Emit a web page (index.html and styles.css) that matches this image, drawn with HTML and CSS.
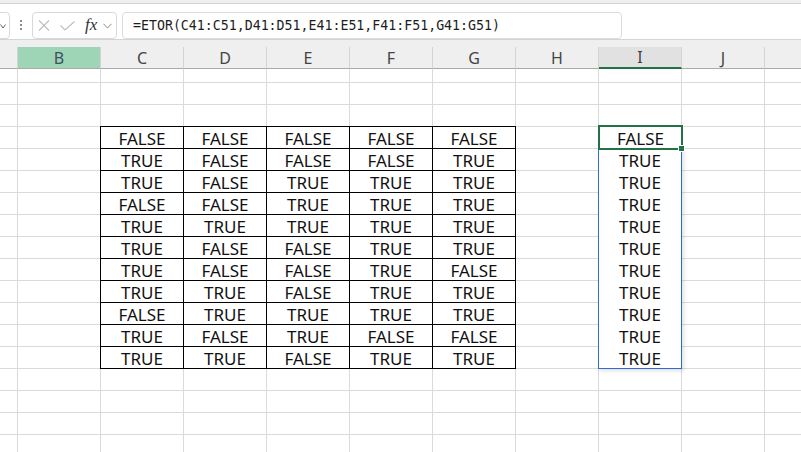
FILE: index.html
```html
<!DOCTYPE html>
<html>
<head>
<meta charset="utf-8">
<link rel="stylesheet" href="styles.css">
</head>
<body>
<div class="topstrip"></div>
<div class="toolbar">
  <div class="namebox">
    <svg width="6" height="5" viewBox="0 0 6 5"><path d="M0.5 0.5 L3 4 L5.5 0.5" fill="none" stroke="#666" stroke-width="1"/></svg>
  </div>
  <div class="sep"><i></i><i></i><i></i></div>
  <div class="fnbox">
    <svg class="ic-x" width="12" height="11" viewBox="0 0 12 11"><path d="M1 0.5 L11 10.5 M11 0.5 L1 10.5" fill="none" stroke="#bdbdbd" stroke-width="1.1"/></svg>
    <svg class="ic-ok" width="15" height="10" viewBox="0 0 15 10"><path d="M0.5 4.5 L5 9 L14.5 0.5" fill="none" stroke="#bdbdbd" stroke-width="1.1"/></svg>
    <span class="fx">fx</span>
    <svg class="ic-dd" width="9" height="6" viewBox="0 0 9 6"><path d="M0.5 0.8 L4.5 5 L8.5 0.8" fill="none" stroke="#8a8a8a" stroke-width="1"/></svg>
  </div>
  <div class="formula">=ETOR(C41:C51,D41:D51,E41:E51,F41:F51,G41:G51)</div>
</div>
<div class="colheads">
  <div class="ch a"></div>
  <div class="ch b">B</div>
  <div class="ch">C</div>
  <div class="ch">D</div>
  <div class="ch">E</div>
  <div class="ch">F</div>
  <div class="ch">G</div>
  <div class="ch">H</div>
  <div class="ch i">I</div>
  <div class="ch">J</div>
  <div class="ch last"></div>
</div>
<div class="sheet">
  <div class="content">
    <div class="table">
      <div>FALSE</div><div>FALSE</div><div>FALSE</div><div>FALSE</div><div>FALSE</div>
      <div>TRUE</div><div>FALSE</div><div>FALSE</div><div>FALSE</div><div>TRUE</div>
      <div>TRUE</div><div>FALSE</div><div>TRUE</div><div>TRUE</div><div>TRUE</div>
      <div>FALSE</div><div>FALSE</div><div>TRUE</div><div>TRUE</div><div>TRUE</div>
      <div>TRUE</div><div>TRUE</div><div>TRUE</div><div>TRUE</div><div>TRUE</div>
      <div>TRUE</div><div>FALSE</div><div>FALSE</div><div>TRUE</div><div>TRUE</div>
      <div>TRUE</div><div>FALSE</div><div>FALSE</div><div>TRUE</div><div>FALSE</div>
      <div>TRUE</div><div>TRUE</div><div>FALSE</div><div>TRUE</div><div>TRUE</div>
      <div>FALSE</div><div>TRUE</div><div>TRUE</div><div>TRUE</div><div>TRUE</div>
      <div>TRUE</div><div>FALSE</div><div>TRUE</div><div>FALSE</div><div>FALSE</div>
      <div>TRUE</div><div>TRUE</div><div>FALSE</div><div>TRUE</div><div>TRUE</div>
    </div>
    <div class="result">
      <div class="active">FALSE<span class="handle"></span></div>
      <div class="range">
        <div class="rc">TRUE</div>
        <div class="rc">TRUE</div>
        <div class="rc">TRUE</div>
        <div class="rc">TRUE</div>
        <div class="rc">TRUE</div>
        <div class="rc">TRUE</div>
        <div class="rc">TRUE</div>
        <div class="rc">TRUE</div>
        <div class="rc">TRUE</div>
        <div class="rc">TRUE</div>
      </div>
    </div>
  </div>
</div>
</body>
</html>
```
FILE: styles.css
```css
html, body {
  margin: 0;
  padding: 0;
}
body {
  width: 801px;
  height: 452px;
  overflow: hidden;
  background: #fff;
  font-family: "Noto Sans", "Noto Sans CJK SC", sans-serif;
}
.topstrip {
  height: 3px;
  background: #efefef;
  border-bottom: 1px solid #d4d4d4;
}
.toolbar {
  height: 36px;
  box-sizing: border-box;
  padding-top: 8px;
  border-bottom: 1px solid #d4d4d4;
  display: flex;
  align-items: flex-start;
  background: #fff;
  overflow: hidden;
}
.namebox {
  flex: none;
  margin-left: -30px;
  width: 40px;
  height: 27px;
  box-sizing: border-box;
  border: 1px solid #d8d8d8;
  border-radius: 4px;
  display: flex;
  align-items: center;
  justify-content: flex-end;
  padding-right: 3px;
}
.namebox svg { display: block; margin-top: 2px; }
.sep {
  flex: none;
  margin-left: 10px;
  margin-top: 8px;
  display: flex;
  flex-direction: column;
  gap: 2px;
}
.sep i {
  display: block;
  width: 2px;
  height: 2px;
  background: #8c8c8c;
}
.fnbox {
  flex: none;
  margin-left: 10px;
  width: 85px;
  height: 27px;
  box-sizing: border-box;
  border: 1px solid #d8d8d8;
  border-radius: 4px;
  background: #fff;
  display: flex;
  align-items: center;
  padding-left: 5px;
}
.fnbox svg { display: block; flex: none; }
.ic-ok { margin-left: 10px; margin-top: 1px; }
.fx {
  margin-left: 10px;
  font-family: "Liberation Serif", serif;
  font-style: italic;
  font-size: 17px;
  color: #333;
  line-height: 1;
  margin-top: -2px;
}
.ic-dd { margin-left: 6px; }
.formula {
  flex: none;
  margin-left: 5px;
  width: 500px;
  height: 27px;
  box-sizing: border-box;
  border: 1px solid #dcdcdc;
  border-radius: 4px;
  padding-left: 10px;
  font-family: "DejaVu Sans Mono", monospace;
  font-size: 13.25px;
  line-height: 25px;
  color: #1e1e1e;
  white-space: nowrap;
}
.colheads {
  display: flex;
  background: #efefef;
  padding-top: 7px;
  overflow: hidden;
}
.ch {
  flex: none;
  width: 83px;
  height: 22px;
  box-sizing: border-box;
  border-right: 1px solid #d4d4d4;
  border-bottom: 1px solid #ababab;
  font-size: 16px;
  line-height: 22px;
  text-align: center;
  color: #444;
}
.ch.a { width: 18px; }
.ch.last { flex: 1 1 auto; width: auto; border-right: none; }
.ch.b {
  background: #9fd5b7;
  color: #3b5360;
}
.ch.i {
  background: #e1e1e1;
  border-bottom: 2px solid #217346;
  line-height: 21px;
}
.sheet {
  height: 383px;
  background-image:
    linear-gradient(to right, transparent 82px, #dadada 82px),
    linear-gradient(to bottom, transparent 21px, #dadada 21px);
  background-size: 83px 100%, 100% 22px;
  background-position: 18px 0, 0 -8px;
}
.content {
  display: flex;
  align-items: flex-start;
  padding-top: 57px;
}
.table {
  flex: none;
  margin-left: 100px;
  display: grid;
  grid-template-columns: repeat(5, 83px);
  grid-auto-rows: 22px;
  border-left: 1px solid #000;
  border-top: 1px solid #000;
  background: #fff;
}
.table > div {
  box-sizing: border-box;
  border-right: 1px solid #000;
  border-bottom: 1px solid #000;
  padding-top: 2px;
  text-align: center;
  font-size: 17px;
  line-height: 20px;
  color: #111;
}
.result {
  flex: none;
  margin-left: 82px;
  display: flex;
  flex-direction: column;
  align-items: flex-start;
}
.active {
  position: relative;
  z-index: 1;
  margin-top: -1px;
  width: 85px;
  height: 25px;
  box-sizing: border-box;
  border: 2px solid #217346;
  background: #fff;
  padding-top: 2px;
  text-align: center;
  font-size: 17px;
  line-height: 19px;
  color: #111;
}
.handle {
  position: absolute;
  right: -3px;
  bottom: -3px;
  width: 5px;
  height: 5px;
  background: #217346;
  box-shadow: 0 0 0 1px #fff;
}
.range {
  margin-top: -2px;
  width: 84px;
  box-sizing: border-box;
  border: 1px solid #2e6bd6;
  border-top: none;
  background: #fff;
  box-shadow: 2px 2px 4px rgba(0, 0, 0, 0.12);
}
.rc {
  height: 22px;
  box-sizing: border-box;
  padding-top: 3px;
  text-align: center;
  font-size: 17px;
  line-height: 20px;
  color: #111;
}
```
